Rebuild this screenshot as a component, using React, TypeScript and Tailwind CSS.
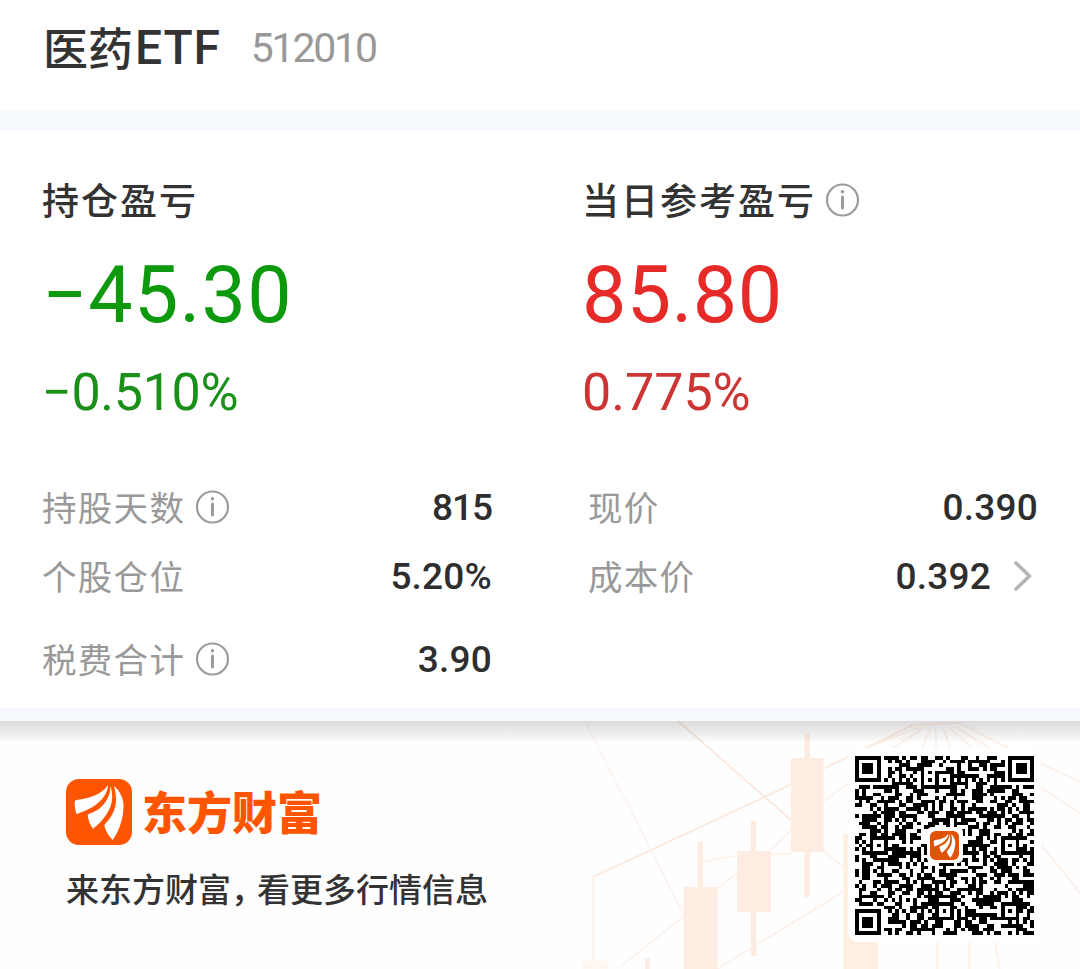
import type { ReactNode } from 'react'
import clsx from 'clsx'

const QR_SIZE = 49
const FINDERS = [[0, 0], [QR_SIZE - 7, 0], [0, QR_SIZE - 7]]
const ALIGNMENTS = [[24, 6], [6, 24], [42, 24], [24, 42], [42, 42]]

// One module of the code: true is black
const isDark = (x: number, y: number) => {
  for (const [fx, fy] of FINDERS) {
    if (x >= fx - 1 && x <= fx + 7 && y >= fy - 1 && y <= fy + 7) {
      const d = Math.max(Math.abs(x - fx - 3), Math.abs(y - fy - 3))
      return d !== 2 && d < 4
    }
  }
  for (const [ax, ay] of ALIGNMENTS) {
    const d = Math.max(Math.abs(x - ax), Math.abs(y - ay))
    if (d <= 2) return d !== 1
  }
  if (Math.max(Math.abs(x - 24), Math.abs(y - 24)) <= 4) return false
  if (x === 6 || y === 6) return (x + y) % 2 === 0
  let h = Math.imul(x + 11, 374761393) ^ Math.imul(y + 7, 668265263)
  h = Math.imul(h ^ (h >>> 13), 1274126177)
  return ((h ^ (h >>> 16)) >>> 0) % 100 < 54
}

const QrCode = () => {
  let d = ''
  for (let y = 0; y < QR_SIZE; y++) {
    for (let x = 0; x < QR_SIZE; x++) {
      if (isDark(x, y)) d += `M${x} ${y}h1v1h-1z`
    }
  }
  return (
    <svg className="size-[179px]" viewBox="0 0 49 49" shapeRendering="crispEdges">
      <path d={d} fill="#000" />
    </svg>
  )
}

const LogoMark = ({ className, fill }: { className: string; fill: string }) => (
  <svg className={className} viewBox="0 0 66 66">
    <rect width="66" height="66" rx="13" fill={fill} />
    <g fill="#fff">
      <path d="M8.700 22.500Q9 21.300 10.500 21C24 19 35 16 42 6.300C42 14 35.500 22.500 26.500 28C21.500 31 16 33 10.500 35.300C9 31 8.500 26 8.700 22.500Z" />
      <path d="M44.500 7C44.500 18 38.500 26 31.500 31C28 33 25 34 21.700 35.500C22 41 24 46 27 49.800C37 42 45.500 31 46.200 19C46.300 14 45.500 10 44.500 7Z" />
      <path d="M48 7C54 12 57.500 19 57.500 27C57.500 40 53 52 46.800 61C43 57 39.500 52.500 38.300 46C45.500 38 50 31 50 21C50 15 49 11 48 7Z" />
    </g>
  </svg>
)

const InfoIcon = () => (
  <svg className="size-[34px] shrink-0" viewBox="0 0 34 34" fill="none" stroke="#9b9b9b" strokeLinecap="round">
    <circle cx="17.500" cy="17" r="15.500" strokeWidth="2.200" />
    <path d="M17.500 14V25" strokeWidth="3" />
    <circle cx="17.500" cy="8.700" r="1.800" fill="#9b9b9b" stroke="none" />
  </svg>
)

const Chevron = () => (
  <svg className="h-[32px] w-[20px] shrink-0" viewBox="0 0 20 32" fill="none">
    <path d="M3 3L16.500 16L3 29" stroke="#b5b5b5" strokeWidth="3.600" strokeLinecap="round" strokeLinejoin="round" />
  </svg>
)

const Num = ({ children, className }: { children: string; className: string }) => (
  <span className={clsx("font-['Roboto','Noto_Sans_CJK_SC',sans-serif] whitespace-nowrap", className)}>
    {children}
  </span>
)

const Row = ({ label, info, value, tight, className, children }: {
  label: string
  info?: boolean
  value: string
  tight?: boolean
  className: string
  children?: ReactNode
}) => (
  <div className={clsx('flex items-center', className)}>
    <span className="text-[34.500px] tracking-[1.300px] text-[#999]">{label}</span>
    {info && <span className="ml-[10px] flex"><InfoIcon /></span>}
    <Num
      className={clsx(
        'ml-auto pt-[3px] text-[37px] font-medium text-[#2e2e2e]',
        tight ? 'tracking-[-1px]' : 'tracking-[0.200px]'
      )}
    >
      {value}
    </Num>
    {children}
  </div>
)

const Watermark = () => (
  <svg className="absolute inset-0 h-full w-full" viewBox="0 0 1080 248">
    <g stroke="#fdefe6" strokeWidth="1.500" fill="none">
      <path d="M678 0L791 99M593 156L790 64L825 47L913 4" stroke="#fce8dc" strokeWidth="1.800" />
      <path d="M585 0L683 192M593 156V248" stroke="#fdf3ec" />
      <path d="M823 81L850 61M620 246L683 196M717 168L737 152M770 130L791 109M717 248L843 171M823 129L850 152" />
      <path d="M700 142C730 133 760 133 792 133" />
      <path d="M913 4L960 2L1008 27M920 6L866 27M925 6L893 27M931 6L922 27M936 6V27M943 6L950 27M949 6L972 27M955 6L990 27" />
      <path d="M1040 42L1080 61M1040 66L1080 92M1040 122L1080 172M937 221V248M969 221V248M995 221L1000 248" />
    </g>
    <g fill="#fdece2">
      <path d="M804.500 12h5.500v164h-5.500zM751 100h5.500v135h-5.500zM697.500 121h5.500v46h-5.500zM645 237h5v11h-5z" />
      <path d="M791 37h32.500v94h-32.500zM737 130h34v61h-34zM683.500 166h34v82h-34z" />
      <path d="M843.500 113h34.500v135h-34.500z" fill="#feefe1" />
    </g>
    <path d="M583 240h25v8h-25z" fill="#fff8f0" />
  </svg>
)

export default function App() {
  return (
    <div className="flex h-[969px] w-[1080px] flex-col overflow-hidden bg-white font-['Noto_Sans_CJK_SC',sans-serif] text-[#333]">
      <header className="flex h-[111px] shrink-0 items-center pb-4 pl-[43px]">
        <h1 className="flex items-center text-[45px] font-medium">
          <span className="relative -top-px">医药</span>
          <Num className="ml-[2px] pt-px text-[48px] font-medium tracking-[0.800px]">ETF</Num>
        </h1>
        <Num className="ml-[30px] pt-[2px] text-[41px] tracking-[-2.200px] text-[#999]">512010</Num>
      </header>
      <div className="h-[20px] shrink-0 bg-[#f6faff]" />

      <main className="flex h-[577px] shrink-0 flex-col">
        <section className="grid grid-cols-2 pt-[44px] whitespace-nowrap">
          <div className="pl-[42px]">
            <h2 className="flex h-[50px] items-center text-[37px] font-medium tracking-[2px]">持仓盈亏</h2>
            <div className="mt-[22px] flex h-[96px] items-center">
              <Num className="text-[79px] tracking-[1.200px] text-[#0d990d]">−45.30</Num>
            </div>
            <div className="mt-[20px] flex h-[60px] items-center">
              <Num className="text-[52px] tracking-[-0.300px] text-[#1a901a]">−0.510%</Num>
            </div>
          </div>
          <div className="pl-[42px]">
            <h2 className="flex h-[50px] items-center text-[37px] font-medium tracking-[2px]">
              当日参考盈亏
              <span className="ml-[9px] flex"><InfoIcon /></span>
            </h2>
            <div className="mt-[22px] flex h-[96px] items-center">
              <Num className="text-[79px] tracking-[0.400px] text-[#e62a27]">85.80</Num>
            </div>
            <div className="mt-[20px] flex h-[60px] items-center">
              <Num className="text-[52px] text-[#cc3534]">0.775%</Num>
            </div>
          </div>
        </section>

        <section className="mt-[49px] flex">
          <div className="w-[492px] pl-[42px]">
            <Row className="h-[69px]" label="持股天数" info value="815" tight />
            <Row className="h-[69px]" label="个股仓位" value="5.20%" />
            <Row className="mt-[14px] h-[69px]" label="税费合计" info value="3.90" />
          </div>
          <div className="ml-[96px] w-[450px]">
            <Row className="h-[69px]" label="现价" value="0.390" />
            <Row className="h-[69px]" label="成本价" value="0.392">
              <span className="mr-[5px] ml-[22px] flex"><Chevron /></span>
            </Row>
          </div>
        </section>
      </main>
      <div className="h-[13px] shrink-0 bg-[#f6faff]" />

      <footer className="relative flex h-[248px] shrink-0 bg-[#fefefe]">
        <Watermark />
        <div className="absolute inset-x-0 top-0 h-[20px] bg-linear-to-b from-black/14 to-black/2" />
        <div className="relative flex-1 pt-[58px] pl-[66px]">
          <div className="flex items-center">
            <LogoMark className="size-[66px]" fill="#ff5500" />
            <span className="ml-[10px] pb-[2px] text-[45px] leading-[60px] font-black text-[#ff5500]">东方财富</span>
          </div>
          <p className="mt-[19px] text-[33px] leading-[48px] font-medium whitespace-nowrap">
            来东方财富<span className="tracking-[-7px]">，</span>看更多行情信息
          </p>
        </div>
        <div className="relative mt-[27px] mr-[39px] flex h-[194px] w-[193px] items-center justify-center rounded-[10px] bg-white">
          <QrCode />
          <span className="absolute flex size-[36px] items-center justify-center rounded-[5px] bg-white">
            <LogoMark className="size-[29px]" fill="#e05206" />
          </span>
        </div>
      </footer>
    </div>
  )
}
